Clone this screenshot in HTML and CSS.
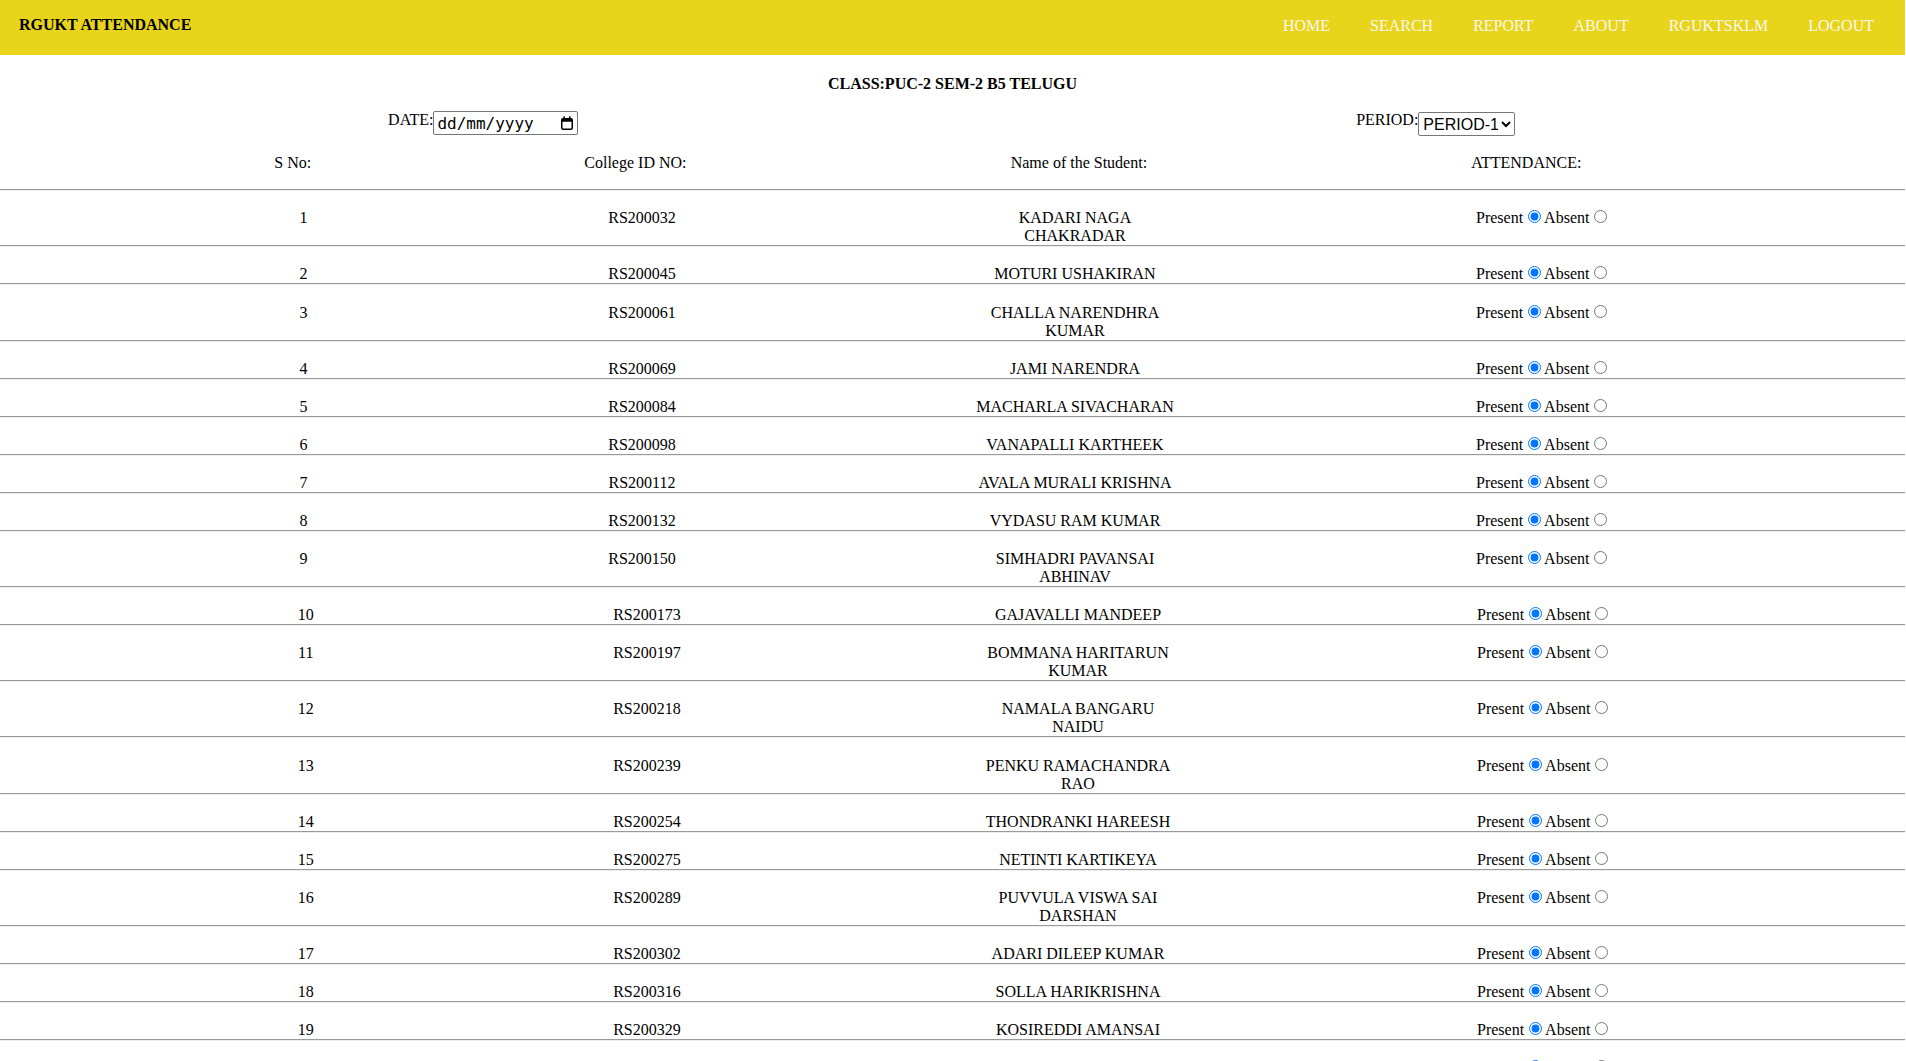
FILE: index.html
```html
<!DOCTYPE html>
<html>
<head>
<meta charset="utf-8">
<title>RGUKT Attendance</title>
<link rel="stylesheet" href="styles.css">
</head>
<body>
<header class="topbar">
  <div class="brand">RGUKT ATTENDANCE</div>
  <nav class="nav">
    <a class="nav-link" href="#">HOME</a>
    <a class="nav-link" href="#">SEARCH</a>
    <a class="nav-link" href="#">REPORT</a>
    <a class="nav-link" href="#">ABOUT</a>
    <a class="nav-link" href="#">RGUKTSKLM</a>
    <a class="nav-link" href="#">LOGOUT</a>
  </nav>
</header>

<main class="content">
  <div class="class-title">CLASS:PUC-2 SEM-2 B5 TELUGU</div>

  <div class="controls">
    <div class="ctl"><label class="ctl-label">DATE:</label><div class="date-box"><input class="date-in" type="text" placeholder="dd/mm/yyyy"><svg class="cal-icon" viewBox="0 0 12 14" width="12" height="14"><rect x="0.75" y="2.75" width="10.5" height="10.5" rx="1.5" fill="none" stroke="#000" stroke-width="1.5"/><rect x="0.75" y="2.75" width="10.5" height="3" fill="#000"/><rect x="2.4" y="0.4" width="1.6" height="2.6" fill="#000"/><rect x="8" y="0.4" width="1.6" height="2.6" fill="#000"/></svg></div></div>
    <div class="ctl"><label class="ctl-label">PERIOD:</label><select class="period-in"><option>PERIOD-1</option><option>PERIOD-2</option></select></div>
  </div>

  <div class="row head">
    <div class="c c-no">S No:</div>
    <div class="c c-id">College ID NO:</div>
    <div class="c c-name">Name of the Student:</div>
    <div class="c c-att">ATTENDANCE:</div>
  </div>
  <div class="sep"></div>

  <div class="row"><div class="c c-no">1</div><div class="c c-id">RS200032</div><div class="c c-name">KADARI NAGA CHAKRADAR</div><div class="c c-att">Present<input type="radio" name="a1" checked>Absent<input type="radio" name="a1"></div></div>
  <div class="sep"></div>
  <div class="row"><div class="c c-no">2</div><div class="c c-id">RS200045</div><div class="c c-name">MOTURI USHAKIRAN</div><div class="c c-att">Present<input type="radio" name="a2" checked>Absent<input type="radio" name="a2"></div></div>
  <div class="sep"></div>
  <div class="row"><div class="c c-no">3</div><div class="c c-id">RS200061</div><div class="c c-name">CHALLA NARENDHRA KUMAR</div><div class="c c-att">Present<input type="radio" name="a3" checked>Absent<input type="radio" name="a3"></div></div>
  <div class="sep"></div>
  <div class="row"><div class="c c-no">4</div><div class="c c-id">RS200069</div><div class="c c-name">JAMI NARENDRA</div><div class="c c-att">Present<input type="radio" name="a4" checked>Absent<input type="radio" name="a4"></div></div>
  <div class="sep"></div>
  <div class="row"><div class="c c-no">5</div><div class="c c-id">RS200084</div><div class="c c-name">MACHARLA SIVACHARAN</div><div class="c c-att">Present<input type="radio" name="a5" checked>Absent<input type="radio" name="a5"></div></div>
  <div class="sep"></div>
  <div class="row"><div class="c c-no">6</div><div class="c c-id">RS200098</div><div class="c c-name">VANAPALLI KARTHEEK</div><div class="c c-att">Present<input type="radio" name="a6" checked>Absent<input type="radio" name="a6"></div></div>
  <div class="sep"></div>
  <div class="row"><div class="c c-no">7</div><div class="c c-id">RS200112</div><div class="c c-name">AVALA MURALI KRISHNA</div><div class="c c-att">Present<input type="radio" name="a7" checked>Absent<input type="radio" name="a7"></div></div>
  <div class="sep"></div>
  <div class="row"><div class="c c-no">8</div><div class="c c-id">RS200132</div><div class="c c-name">VYDASU RAM KUMAR</div><div class="c c-att">Present<input type="radio" name="a8" checked>Absent<input type="radio" name="a8"></div></div>
  <div class="sep"></div>
  <div class="row"><div class="c c-no">9</div><div class="c c-id">RS200150</div><div class="c c-name">SIMHADRI PAVANSAI ABHINAV</div><div class="c c-att">Present<input type="radio" name="a9" checked>Absent<input type="radio" name="a9"></div></div>
  <div class="sep"></div>
  <div class="row wide"><div class="c c-no">10</div><div class="c c-id">RS200173</div><div class="c c-name">GAJAVALLI MANDEEP</div><div class="c c-att">Present<input type="radio" name="a10" checked>Absent<input type="radio" name="a10"></div></div>
  <div class="sep"></div>
  <div class="row wide"><div class="c c-no">11</div><div class="c c-id">RS200197</div><div class="c c-name">BOMMANA HARITARUN KUMAR</div><div class="c c-att">Present<input type="radio" name="a11" checked>Absent<input type="radio" name="a11"></div></div>
  <div class="sep"></div>
  <div class="row wide"><div class="c c-no">12</div><div class="c c-id">RS200218</div><div class="c c-name">NAMALA BANGARU NAIDU</div><div class="c c-att">Present<input type="radio" name="a12" checked>Absent<input type="radio" name="a12"></div></div>
  <div class="sep"></div>
  <div class="row wide"><div class="c c-no">13</div><div class="c c-id">RS200239</div><div class="c c-name">PENKU RAMACHANDRA RAO</div><div class="c c-att">Present<input type="radio" name="a13" checked>Absent<input type="radio" name="a13"></div></div>
  <div class="sep"></div>
  <div class="row wide"><div class="c c-no">14</div><div class="c c-id">RS200254</div><div class="c c-name">THONDRANKI HAREESH</div><div class="c c-att">Present<input type="radio" name="a14" checked>Absent<input type="radio" name="a14"></div></div>
  <div class="sep"></div>
  <div class="row wide"><div class="c c-no">15</div><div class="c c-id">RS200275</div><div class="c c-name">NETINTI KARTIKEYA</div><div class="c c-att">Present<input type="radio" name="a15" checked>Absent<input type="radio" name="a15"></div></div>
  <div class="sep"></div>
  <div class="row wide"><div class="c c-no">16</div><div class="c c-id">RS200289</div><div class="c c-name">PUVVULA VISWA SAI DARSHAN</div><div class="c c-att">Present<input type="radio" name="a16" checked>Absent<input type="radio" name="a16"></div></div>
  <div class="sep"></div>
  <div class="row wide"><div class="c c-no">17</div><div class="c c-id">RS200302</div><div class="c c-name">ADARI DILEEP KUMAR</div><div class="c c-att">Present<input type="radio" name="a17" checked>Absent<input type="radio" name="a17"></div></div>
  <div class="sep"></div>
  <div class="row wide"><div class="c c-no">18</div><div class="c c-id">RS200316</div><div class="c c-name">SOLLA HARIKRISHNA</div><div class="c c-att">Present<input type="radio" name="a18" checked>Absent<input type="radio" name="a18"></div></div>
  <div class="sep"></div>
  <div class="row wide"><div class="c c-no">19</div><div class="c c-id">RS200329</div><div class="c c-name">KOSIREDDI AMANSAI</div><div class="c c-att">Present<input type="radio" name="a19" checked>Absent<input type="radio" name="a19"></div></div>
  <div class="sep"></div>
  <div class="row wide"><div class="c c-no">20</div><div class="c c-id">RS200341</div><div class="c c-name">KORADA SAI KUMAR</div><div class="c c-att">Present<input type="radio" name="a20" checked>Absent<input type="radio" name="a20"></div></div>
  <div class="sep"></div>
</main>
</body>
</html>
```

FILE: styles.css
```css
html {
  overflow: hidden;
}
body {
  margin: 0 1px 0 0;
  font-family: "Liberation Serif", "Times New Roman", serif;
  font-size: 16px;
  color: #000;
  background: #fff;
}

.topbar {
  height: 55px;
  background: #e8d41a;
  display: flex;
  justify-content: space-between;
  align-items: flex-start;
}
.brand {
  padding: 16px 0 0 19px;
  font-weight: bold;
}
.nav {
  display: flex;
  gap: 40px;
  padding: 17px 31px 0 0;
}
.nav-link {
  color: #f8f8f0;
  text-decoration: none;
}

.class-title {
  margin-top: 20px;
  text-align: center;
  font-weight: bold;
}

.controls {
  display: flex;
  margin-top: 18px;
}
.ctl {
  flex: 1 1 0;
  display: flex;
  justify-content: center;
  align-items: flex-start;
  padding-left: 14px;
}
.date-box {
  position: relative;
  width: 145px;
  height: 24px;
}
.date-in {
  box-sizing: border-box;
  width: 145px;
  height: 24px;
  margin: 0;
  padding: 0 0 0 3px;
  border: 1px solid #767676;
  border-radius: 2px;
  font: 16px "DejaVu Sans Mono", monospace;
  color: #000;
  background: #fff;
  outline: none;
}
.date-in::placeholder {
  color: #000;
  opacity: 1;
}
.cal-icon {
  position: absolute;
  right: 5px;
  top: 5px;
}
.period-in {
  box-sizing: border-box;
  width: 97px;
  height: 24px;
  margin: 1px 0 0 0;
  border: 1px solid #767676;
  border-radius: 2px;
  font: 16px "Liberation Sans", Arial, sans-serif;
  color: #000;
  background: #fff;
}

.row {
  display: flex;
  align-items: baseline;
  padding-top: 16.1px;
}
.row.head {
  padding-top: 17.7px;
  padding-bottom: 17.6px;
}
.c {
  flex: none;
  text-align: center;
}
.c-no { width: 100px; margin-left: 253.5px; }
.c-id { width: 160px; margin-left: 208.5px; }
.c-name { width: 204px; margin-left: 251px; }
.c-att { width: 200px; margin-left: 299px; text-align: left; white-space: nowrap; }

.row.wide .c-no { margin-left: 255.7px; }
.row.wide .c-id { margin-left: 211.3px; }
.row.wide .c-name { margin-left: 249px; }
.row.wide .c-att { margin-left: 297px; }

.row.head .c-no { margin-left: 242.75px; }
.row.head .c-id { margin-left: 212.65px; }
.row.head .c-name { margin-left: 261.5px; }
.row.head .c-att { margin-left: 290.3px; }

.c-att input {
  margin: 3px 3px 0 5px;
}

.sep {
  height: 0;
  border-top: 1px solid #9a9a9a;
  border-bottom: 1px solid #eeeeee;
}
```
